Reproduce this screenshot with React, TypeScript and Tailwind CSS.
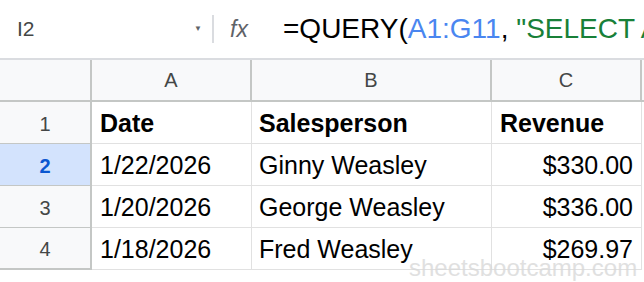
const rows = [
  { n: 1, date: "Date", name: "Salesperson", rev: "Revenue", head: true },
  { n: 2, date: "1/22/2026", name: "Ginny Weasley", rev: "$330.00", selected: true },
  { n: 3, date: "1/20/2026", name: "George Weasley", rev: "$336.00" },
  { n: 4, date: "1/18/2026", name: "Fred Weasley", rev: "$269.97" },
];

export default function App() {
  return (
    <div
      className="relative h-[282px] w-[644px] overflow-hidden bg-white"
      style={{ fontFamily: '"Liberation Sans", Arial, sans-serif' }}
    >
      {/* formula bar */}
      <div className="flex h-[60px] items-center border-b-2 border-[#dadce0] whitespace-nowrap">
        <div className="w-[190px] pl-[17px] text-[21px] text-[#444746]">I2</div>
        <div className="w-[22px] pl-[4px] text-[8px] text-[#5f6368]">▼</div>
        <div className="h-[28px] w-[2px] bg-[#dadce0]" />
        <div className="w-[69px] pl-[16px] text-[23px] italic text-[#5f6368]">fx</div>
        <div className="min-w-0 flex-1 overflow-hidden text-[28px] text-black">
          =QUERY(<span className="text-[#4a86f0]">A1:G11</span>, <span className="text-[#188038]">"SELECT A, B, C</span>
        </div>
      </div>

      {/* column headers */}
      <div className="flex h-[42px] border-b-2 border-[#c4c7c5] bg-[#f8f9fa] text-[20px] text-[#444746]">
        <div className="w-[92px] border-r-2 border-[#c4c7c5]" />
        <div className="flex w-[160px] items-center justify-center border-r-2 border-[#c4c7c5]">A</div>
        <div className="flex w-[240px] items-center justify-center border-r-2 border-[#c4c7c5]">B</div>
        <div className="flex w-[150px] items-center justify-center border-r-2 border-[#c4c7c5]">C</div>
      </div>

      {/* data rows */}
      {rows.map((r) => (
        <div key={r.n} className="flex h-[42px] text-[25px] text-black">
          <div
            className={
              r.selected
                ? "flex w-[92px] items-center justify-center border-r-2 border-b border-[#c4c7c5] bg-[#d3e3fd] pt-[2px] text-[20px] font-bold text-[#0b57d0]"
                : r.n === 4
                ? "flex w-[92px] items-center justify-center border-r-2 border-b-2 border-[#c4c7c5] bg-[#f8f9fa] pt-[2px] text-[20px] text-[#444746]"
                : "flex w-[92px] items-center justify-center border-r-2 border-b border-[#c4c7c5] bg-[#f8f9fa] pt-[2px] text-[20px] text-[#444746]"
            }
          >
            {r.n}
          </div>
          <div className={`flex w-[160px] items-center border-r border-b border-[#e1e1e1] pl-[8px] pt-[3px] ${r.head ? "font-bold" : ""}`}>
            {r.date}
          </div>
          <div className={`flex w-[240px] items-center border-r border-b border-[#e1e1e1] pl-[7px] pt-[3px] ${r.head ? "font-bold" : ""}`}>
            {r.name}
          </div>
          <div
            className={
              r.head
                ? "flex w-[150px] items-center border-r border-b border-[#e1e1e1] pl-[8px] pt-[3px] font-bold"
                : "flex w-[150px] items-center justify-end border-r border-b border-[#e1e1e1] pr-[8px] pt-[3px]"
            }
          >
            {r.rev}
          </div>
        </div>
      ))}

      {/* watermark */}
      <div className="pointer-events-none absolute left-[409px] top-[250px] text-[24px] text-[#d9d9d9] opacity-80">
        sheetsbootcamp.com
      </div>
    </div>
  );
}
